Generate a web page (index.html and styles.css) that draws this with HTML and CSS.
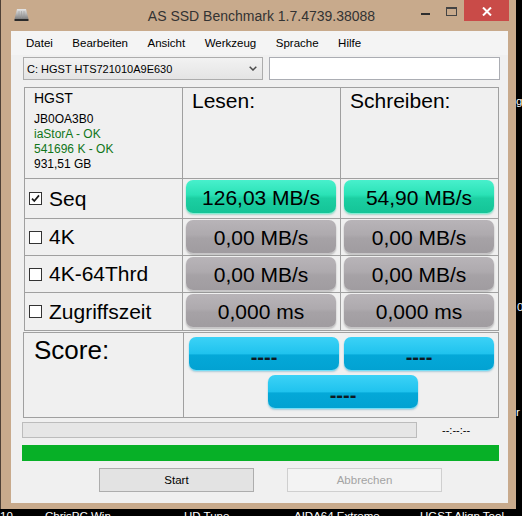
FILE: index.html
```html
<!DOCTYPE html>
<html lang="de">
<head>
<meta charset="utf-8">
<title>AS SSD Benchmark</title>
<link rel="stylesheet" href="styles.css">
</head>
<body>
<div class="screen">
  <div class="window">
    <div class="titlebar">
      <div class="tb-left">
        <svg class="app-icon" width="15" height="14" viewBox="0 0 15 14">
          <defs>
            <linearGradient id="hd" x1="0" y1="0" x2="0" y2="1">
              <stop offset="0" stop-color="#e6e6e6"/>
              <stop offset="0.5" stop-color="#b4b4b4"/>
              <stop offset="1" stop-color="#7e7e7e"/>
            </linearGradient>
          </defs>
          <path d="M3 1 H12 L14.5 11 H0.5 Z" fill="url(#hd)"/>
          <path d="M5 3 V10 M7.5 3 V10 M10 3 V10" stroke="#9a9a9a" stroke-width="0.6"/>
          <rect x="0.5" y="11" width="14" height="2" fill="#2a2a2a"/>
        </svg>
      </div>
      <div class="tb-title">AS SSD Benchmark 1.7.4739.38088</div>
      <div class="tb-right">
        <div class="ctl ctl-min"><span class="min-bar"></span></div>
        <div class="ctl ctl-max"><span class="max-box"></span></div>
        <div class="ctl ctl-close">
          <svg width="10" height="9" viewBox="0 0 10 9">
            <path d="M1 0.5 L9 8.5 M9 0.5 L1 8.5" stroke="#ffffff" stroke-width="2"/>
          </svg>
        </div>
      </div>
    </div>

    <div class="client">
      <nav class="menubar">
        <span>Datei</span>
        <span>Bearbeiten</span>
        <span>Ansicht</span>
        <span>Werkzeug</span>
        <span>Sprache</span>
        <span>Hilfe</span>
      </nav>

      <div class="drive-row">
        <div class="combo">
          <span class="combo-text">C: HGST HTS721010A9E630</span>
          <svg class="combo-arrow" width="8" height="5" viewBox="0 0 8 5">
            <path d="M0.7 0.7 L4 4 L7.3 0.7" stroke="#4a4a4a" stroke-width="1.5" fill="none"/>
          </svg>
        </div>
        <div class="textbox"></div>
      </div>

      <div class="bench-grid">
        <div class="cell info">
          <div class="model">HGST</div>
          <div class="line">JB0OA3B0</div>
          <div class="line ok">iaStorA - OK</div>
          <div class="line ok">541696 K - OK</div>
          <div class="line">931,51 GB</div>
        </div>
        <div class="cell head">Lesen:</div>
        <div class="cell head">Schreiben:</div>

        <div class="cell label"><span class="cb">
          <svg width="11" height="11" viewBox="0 0 11 11"><path d="M2 5.6 L4.3 8 L9 2.4" stroke="#1a1a1a" stroke-width="1.7" fill="none"/></svg>
        </span>Seq</div>
        <div class="cell val"><div class="res green">126,03 MB/s</div></div>
        <div class="cell val"><div class="res green">54,90 MB/s</div></div>

        <div class="cell label"><span class="cb"></span>4K</div>
        <div class="cell val"><div class="res gray">0,00 MB/s</div></div>
        <div class="cell val"><div class="res gray">0,00 MB/s</div></div>

        <div class="cell label"><span class="cb"></span>4K-64Thrd</div>
        <div class="cell val"><div class="res gray">0,00 MB/s</div></div>
        <div class="cell val"><div class="res gray">0,00 MB/s</div></div>

        <div class="cell label"><span class="cb"></span>Zugriffszeit</div>
        <div class="cell val"><div class="res gray">0,000 ms</div></div>
        <div class="cell val"><div class="res gray">0,000 ms</div></div>
      </div>

      <div class="score-grid">
        <div class="cell score-label">Score:</div>
        <div class="cell score-vals">
          <div class="score-row">
            <div class="sbox">----</div>
            <div class="sbox">----</div>
          </div>
          <div class="score-row second">
            <div class="sbox">----</div>
          </div>
        </div>
      </div>

      <div class="progress-row">
        <div class="pbar"></div>
        <span class="time">--:--:--</span>
      </div>
      <div class="pbar-full"></div>

      <div class="btn-row">
        <button class="btn">Start</button>
        <button class="btn disabled" disabled>Abbrechen</button>
      </div>
    </div>
  </div>

  <div class="desk-bottom">
    <span class="dl dl-1">10</span>
    <span class="dl dl-2">ChrisPC Win</span>
    <span class="dl dl-3">HD Tune</span>
    <span class="dl dl-4">AIDA64 Extreme</span>
    <span class="dl dl-5">HGST Align Tool</span>
  </div>
  <span class="dr dr-g">g</span>
  <span class="dr dr-0">0</span>
  <span class="dr dr-r">r</span>
</div>
</body>
</html>
```

FILE: styles.css
```css
* { box-sizing: border-box; }

html, body {
  margin: 0;
  padding: 0;
  background: #000;
}

body {
  width: 522px;
  height: 516px;
  overflow: hidden;
  font-family: "Liberation Sans", Arial, sans-serif;
  color: #000;
}

.screen {
  position: relative;
  width: 522px;
  height: 516px;
  overflow: hidden;
}

/* ---------- window frame ---------- */
.window {
  width: 516px;
  height: 509px;
  background: #c8aa8c;
  border-left: 1px solid #4e4036;
  display: flex;
  flex-direction: column;
}

.titlebar {
  height: 31px;
  flex: none;
  display: grid;
  grid-template-columns: 1fr auto 1fr;
  padding: 0 7px 0 13px;
}

.tb-left {
  align-self: start;
  padding-top: 8px;
}

.app-icon { display: block; }

.tb-title {
  align-self: center;
  font-size: 14px;
  color: #333;
  white-space: nowrap;
}

.tb-right {
  justify-self: end;
  align-self: start;
  display: flex;
}

.ctl {
  height: 21px;
  display: flex;
  justify-content: center;
  align-items: flex-start;
}

.ctl-min { width: 26px; }
.ctl-max { width: 26px; }

.min-bar {
  display: block;
  width: 9px;
  height: 2px;
  margin-top: 13px;
  background: #2e2e2e;
}

.max-box {
  display: block;
  width: 11px;
  height: 9px;
  margin-top: 7px;
  border: 1px solid #444;
  border-top-width: 2px;
}

.ctl-close {
  width: 45px;
  background: #c94b48;
  align-items: center;
  padding-top: 1px;
}

.ctl-close svg { display: block; }

/* ---------- client area ---------- */
.client {
  flex: 1;
  margin: 0 8px 6px 10px;
  background: #f0f0f0;
  display: flex;
  flex-direction: column;
}

.menubar {
  height: 24px;
  flex: none;
  display: flex;
  align-items: center;
  gap: 19.5px;
  padding-left: 15px;
  font-size: 11.5px;
  background: #f4f4f4;
}

.drive-row {
  margin-top: 2px;
  height: 23px;
  display: flex;
  padding-left: 12px;
}

.combo {
  width: 240px;
  height: 23px;
  border: 1px solid #acacac;
  background: linear-gradient(#f2f2f2, #e4e4e4);
  display: flex;
  align-items: center;
  justify-content: space-between;
  padding: 0 5px 0 3px;
  font-size: 11px;
}

.combo-arrow { display: block; }

.textbox {
  width: 231px;
  height: 23px;
  margin-left: 6px;
  border: 1px solid #abadb3;
  background: #fff;
}

/* ---------- benchmark table ---------- */
.bench-grid {
  margin: 7px 0 0 13px;
  width: 475px;
  display: grid;
  grid-template-columns: 157px 157px 157px;
  grid-template-rows: 90px 39px 36px 36px 37px;
  gap: 1px;
  border: 1px solid #a0a0a0;
  background: #a0a0a0;
}

.cell { background: #f0f0f0; }

.info { padding: 2px 0 0 9px; }

.info .model {
  font-size: 14px;
  line-height: 16px;
  margin-bottom: 6px;
}

.info .line {
  font-size: 12px;
  line-height: 15px;
}

.info .ok { color: #11761a; }

.head {
  padding: 1px 0 0 9px;
  font-size: 21px;
}

.label {
  display: flex;
  align-items: center;
  padding-left: 4px;
  font-size: 21px;
}

.cb {
  width: 13px;
  height: 13px;
  flex: none;
  border: 1px solid #333;
  background: #fff;
  margin-right: 7px;
  display: flex;
  align-items: center;
  justify-content: center;
}

.cb svg { display: block; }

.val { padding: 1px 0 0 3px; }

.res {
  width: 150px;
  height: 33px;
  border-radius: 7px;
  display: flex;
  align-items: center;
  justify-content: center;
  padding-top: 3px;
  font-size: 21px;
}

.res.green {
  background: linear-gradient(#48f0cc 0%, #2ae2b6 45%, #1ccfa2 55%, #14c497 100%);
  box-shadow: 0 1px 1px #7ef0d4, 0 2px 2px rgba(0, 120, 90, 0.25);
}

.res.gray {
  background: linear-gradient(#b8b4b8 0%, #aeaaae 45%, #a6a2a6 55%, #a09ca0 100%);
  box-shadow: 0 1px 1px #c8c6c8, 0 2px 2px rgba(0, 0, 0, 0.22);
}

/* ---------- score ---------- */
.score-grid {
  margin: 1px 0 0 12px;
  width: 476px;
  display: grid;
  grid-template-columns: 159px 314px;
  grid-template-rows: 84px;
  gap: 1px;
  border: 1px solid #a0a0a0;
  background: #a0a0a0;
}

.score-label {
  padding: 2px 0 0 10px;
  font-size: 26px;
}

.score-vals {
  padding: 4px 0 0 5px;
  display: flex;
  flex-direction: column;
  gap: 5px;
}

.score-row {
  display: flex;
  gap: 5px;
}

.score-row.second { margin-left: 79px; }

.sbox {
  width: 150px;
  height: 33px;
  border-radius: 7px;
  background: linear-gradient(#3cd2f6 0%, #20c3ee 50%, #04a8d8 55%, #02a2d2 100%);
  box-shadow: 0 1px 1px #6ee0fa, 0 2px 2px rgba(0, 90, 140, 0.25);
  text-align: center;
  font-size: 20px;
  font-weight: bold;
  line-height: 20px;
  padding-top: 10px;
  color: #0c1a22;
}

/* ---------- progress ---------- */
.progress-row {
  margin: 4px 0 0 11px;
  height: 16px;
  display: flex;
  align-items: center;
}

.pbar {
  width: 395px;
  height: 16px;
  border: 1px solid #bcbcbc;
  background: #e6e6e6;
}

.time {
  margin-left: 25px;
  font-size: 11px;
}

.pbar-full {
  margin: 7px 0 0 11px;
  width: 477px;
  height: 16px;
  background: #07b027;
}

.btn-row {
  margin-top: 7px;
  padding-left: 88px;
  display: flex;
  gap: 33px;
}

.btn {
  width: 155px;
  height: 24px;
  margin: 0;
  border: 1px solid #adadad;
  background: #e3e3e3;
  font-family: "Liberation Sans", Arial, sans-serif;
  font-size: 11.5px;
  color: #000;
  padding: 0;
}

.btn.disabled {
  border-color: #cfcfcf;
  background: #f3f3f3;
  color: #a3a3a3;
}

/* ---------- desktop behind ---------- */
.desk-bottom {
  position: relative;
  width: 522px;
  height: 7px;
  overflow: hidden;
}

.dl, .dr {
  position: absolute;
  color: #fff;
  font-size: 11.5px;
  line-height: 14px;
  white-space: nowrap;
}

.dl { top: 0; }
.dl-1 { left: 0; }
.dl-2 { left: 45px; }
.dl-3 { left: 184px; }
.dl-4 { left: 294px; }
.dl-5 { left: 420px; }

.dr-g { left: 516px; top: 94px; }
.dr-0 { left: 517px; top: 300px; color: #e8f0ff; }
.dr-r { left: 516px; top: 405px; }
```
